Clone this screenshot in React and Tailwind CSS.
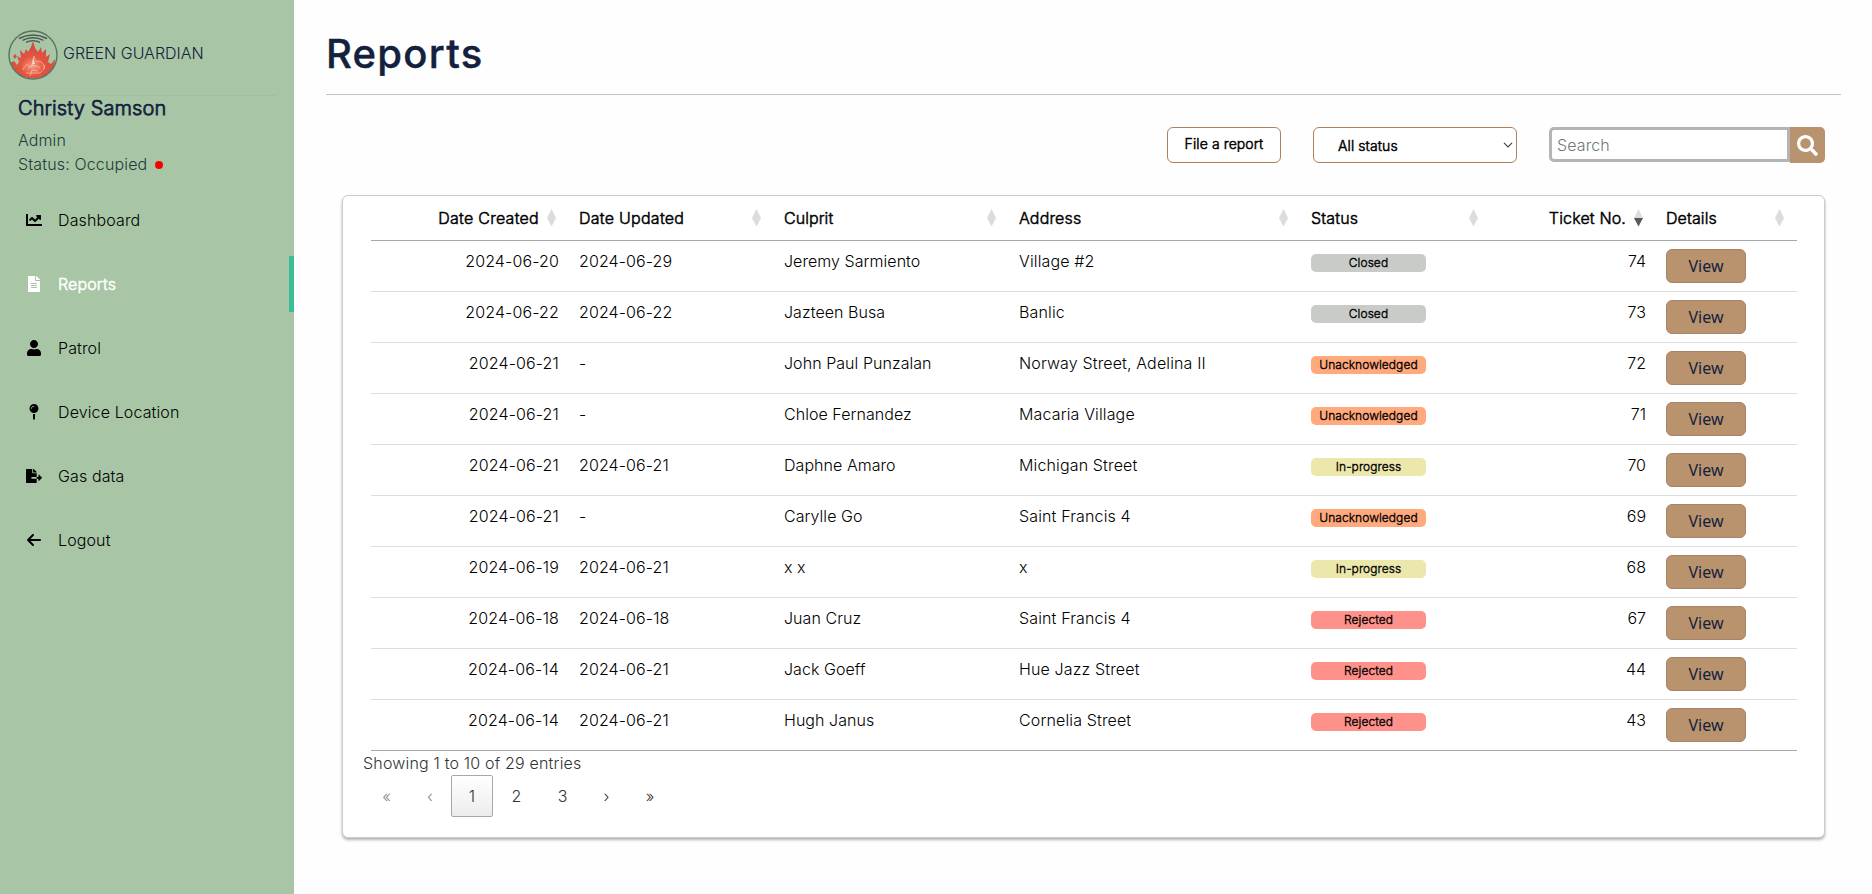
import { FaChartLine, FaFileAlt, FaUser, FaMapPin, FaFileExport, FaSearch } from "react-icons/fa";
import { FaArrowLeft } from "react-icons/fa6";

const BOLD = "[-webkit-text-stroke:0.5px_currentColor]";

const nav = [
  { label: "Dashboard", icon: FaChartLine },
  { label: "Reports", icon: FaFileAlt, active: true },
  { label: "Patrol", icon: FaUser },
  { label: "Device Location", icon: FaMapPin },
  { label: "Gas data", icon: FaFileExport },
  { label: "Logout", icon: FaArrowLeft },
];

const rows = [
  ["2024-06-20", "2024-06-29", "Jeremy Sarmiento", "Village #2", "Closed", 74],
  ["2024-06-22", "2024-06-22", "Jazteen Busa", "Banlic", "Closed", 73],
  ["2024-06-21", "-", "John Paul Punzalan", "Norway Street, Adelina II", "Unacknowledged", 72],
  ["2024-06-21", "-", "Chloe Fernandez", "Macaria Village", "Unacknowledged", 71],
  ["2024-06-21", "2024-06-21", "Daphne Amaro", "Michigan Street", "In-progress", 70],
  ["2024-06-21", "-", "Carylle Go", "Saint Francis 4", "Unacknowledged", 69],
  ["2024-06-19", "2024-06-21", "x x", "x", "In-progress", 68],
  ["2024-06-18", "2024-06-18", "Juan Cruz", "Saint Francis 4", "Rejected", 67],
  ["2024-06-14", "2024-06-21", "Jack Goeff", "Hue Jazz Street", "Rejected", 44],
  ["2024-06-14", "2024-06-21", "Hugh Janus", "Cornelia Street", "Rejected", 43],
];

const badge = {
  Closed: "bg-[#c9cbc8]",
  Unacknowledged: "bg-[#ffa97c]",
  "In-progress": "bg-[#ece7ab]",
  Rejected: "bg-[#ff918b]",
};

const columns = [
  { label: "Date Created", right: true, tracking: "tracking-[0.26px]" },
  { label: "Date Updated", tracking: "tracking-[0.26px]" },
  { label: "Culprit", tracking: "tracking-[0.05px]" },
  { label: "Address", tracking: "tracking-[0.15px]" },
  { label: "Status", tracking: "tracking-[0.15px]" },
  { label: "Ticket No.", right: true, sorted: true, tracking: "tracking-[0.15px]" },
  { label: "Details", tracking: "tracking-[0.1px]" },
];

const GRID = "grid grid-cols-[198px_205px_235px_292px_190px_165px_141px]";

function Logo() {
  return (
    <svg viewBox="0 0 50 50" className="size-[50px] shrink-0">
      <defs>
        <radialGradient id="flame" cx="50%" cy="68%" r="60%">
          <stop offset="0" stopColor="#f39a80" />
          <stop offset="0.45" stopColor="#e4533f" />
          <stop offset="1" stopColor="#cf4a42" />
        </radialGradient>
        <clipPath id="disc"><circle cx="25" cy="25" r="23.6" /></clipPath>
      </defs>
      <g clipPath="url(#disc)">
        <path d="M2 33 L6 31 L9 35 L11 32 L9 26 L13 28 L12 20 L16 24 L18 19 L20 22 L23 17 L25 11 L27 18 L30 22 L33 17 L34 23 L38 19 L38 27 L42 24 L40 32 L43 34 L47 29 L46 40 L38 48 L12 48 L4 40 Z" fill="url(#flame)" />
        <path d="M5 26 l2.4 -2 l1.4 2.6 l-2 2.4z" fill="#cf5045" />
        <path d="M15 40 q3 -8 6 -4 t5 -10 q1 8 5 5 q6 2 5 8 M18 43 h14 q5 -3 5 -8 M20 38 q6 -5 12 0 M25 28 v8 M22 46 l2 -6 l6 1" fill="none" stroke="#ffd0b0" strokeWidth="0.8" opacity="0.75" />
        <path d="M24 34 l1.5 -5 l1.5 5z" fill="#ffe9d5" opacity="0.8" />
      </g>
      <path d="M11 8.5 Q25 1.5 39 8.5" fill="none" stroke="#4d5551" strokeWidth="1.5" />
      <path d="M14.5 10.3 Q25 5.2 35.5 10.3" fill="none" stroke="#4d5551" strokeWidth="1.3" />
      <path d="M18 12.3 Q25 9 32 12.3" fill="none" stroke="#4d5551" strokeWidth="1.3" />
      <circle cx="25" cy="25" r="24" fill="none" stroke="#557462" strokeWidth="1.4" />
    </svg>
  );
}

function SortMark({ sorted }) {
  return (
    <svg viewBox="0 0 9 18" className="h-[18px] w-[9px] shrink-0">
      <path d="M4.5 0 L9 9 H0 Z" fill="#dcdcdc" />
      <path d="M0 9 H9 L4.5 17.5 Z" fill={sorted ? "#565b60" : "#dcdcdc"} />
    </svg>
  );
}

export default function App() {
  return (
    <div className="flex h-[894px] w-[1872px] overflow-hidden bg-[#fefefe] font-['Inter',sans-serif] text-base font-light text-black">
      <aside className="flex w-[294px] shrink-0 flex-col bg-[#a8c6a5]">
        <div className="flex h-[95px] items-center gap-[5px] pt-[15px] pl-2 text-[#14213d]">
          <Logo />
          <span className="pb-1 leading-6">GREEN GUARDIAN</span>
        </div>
        <div className="mr-[18px] ml-4 h-px bg-[#9fbf9f]" />
        <div className="flex flex-col pl-[18px] text-[#1f3a3a]">
          <div className="mb-2 h-6 text-[20px] leading-6 tracking-[0.1px] text-[#14213d] [-webkit-text-stroke:0.75px_currentColor]">Christy Samson</div>
          <div className="leading-[25px] tracking-[0.1px]">Admin</div>
          <div className="-mt-px mb-px flex items-center gap-2 leading-[25px] tracking-[0.15px]">
            Status: Occupied
            <span className="size-2 rounded-full bg-[#f80000]" />
          </div>
        </div>
        <nav className="mt-[14px] flex flex-col gap-2 tracking-[0.12px]">
          {nav.map(({ label, icon: Icon, active }) => (
            <a
              key={label}
              className={`flex h-14 items-center gap-[15px] pl-[25px] ${active ? "border-r-[5px] border-[#3cbc98] text-white [-webkit-text-stroke:0.5px_currentColor]" : ""}`}
            >
              <span className="flex w-[18px] justify-center [-webkit-text-stroke:0px]"><Icon size={16} /></span>
              {label}
            </a>
          ))}
        </nav>
      </aside>

      <main className="flex flex-1 flex-col pr-[31px] pl-8">
        <h1 className="h-[94px] pt-[29px] text-[40px] leading-[50px] font-medium tracking-[1.25px] text-[#14213d] [-webkit-text-stroke:0.4px_currentColor]">Reports</h1>
        <div className="mr-px h-px bg-[#c3c3c3]" />

        <div className="mt-8 mr-[17px] flex justify-end gap-8">
          <button className={`h-9 w-[114px] rounded-md border border-[#b18058] bg-white pb-[3px] text-[14px] tracking-[0.1px] ${BOLD}`}>
            File a report
          </button>
          <div className="flex h-9 w-[204px] items-center justify-between rounded-md border border-[#b18058] bg-white pr-[3px] pl-6">
            <span className={`text-[14px] tracking-[0.1px] ${BOLD}`}>All status</span>
            <svg viewBox="0 0 10 6" className="h-1.5 w-2.5" fill="none" stroke="#444" strokeWidth="1.2">
              <path d="M1 0.8 L5 4.8 L9 0.8" />
            </svg>
          </div>
          <div className="flex h-9">
            <div className="flex h-[35px] w-[241px] items-center rounded-l-[5px] border-[3px] border-[#b4b4b4] bg-white pl-[5px] tracking-[0.1px] text-[#757575]">
              Search
            </div>
            <button className="flex h-9 w-[35px] items-center justify-center rounded-r-[5px] bg-[#b8936e] text-white">
              <FaSearch size={21} />
            </button>
          </div>
        </div>

        <section className="mt-8 mr-[17px] ml-4 flex h-[643px] flex-col rounded-md border border-[#cbcbcb] bg-white pr-[27px] pl-7 shadow-[0_2px_3px_rgba(0,0,0,0.3)]">
          <div className={`${GRID} h-[45px] border-b border-[#a8a8a8]`}>
            {columns.map((c) => (
              <div key={c.label} className={`flex items-center pr-[13px] pl-[10px] ${c.right ? "justify-end gap-2" : "justify-between"}`}>
                <span className={`${BOLD} ${c.tracking}`}>{c.label}</span>
                <SortMark sorted={c.sorted} />
              </div>
            ))}
          </div>
          {rows.map((r, i) => (
            <div
              key={r[5]}
              className={`${GRID} h-[51px] border-b leading-6 *:px-[10px] *:pt-2 ${i === rows.length - 1 ? "border-[#a8a8a8]" : "border-[#dddddd]"}`}
            >
              <div className="text-right tracking-[0.13px]">{r[0]}</div>
              <div className="tracking-[0.1px]">{r[1]}</div>
              <div className="tracking-[0.05px]">{r[2]}</div>
              <div className="tracking-[0.14px]">{r[3]}</div>
              <div>
                <div className={`mt-[5px] h-[18px] w-[115px] rounded-[5px] text-center text-[12px] leading-[18px] tracking-[0.05px] [-webkit-text-stroke:0.35px_currentColor] ${badge[r[4]]}`}>{r[4]}</div>
              </div>
              <div className="text-right">{r[5]}</div>
              <div>
                <button className="flex h-[34px] w-20 items-center justify-center rounded-md border border-[#a58469] bg-[#b8936e] font-['Noto_Sans',sans-serif] font-normal text-[#14213d]">
                  View
                </button>
              </div>
            </div>
          ))}
          <div className="-ml-2 h-6 leading-6 tracking-[0.18px] text-[#333]">Showing 1 to 10 of 29 entries</div>
          <div className="-ml-[7px] flex h-[42px] items-center text-[#333] *:text-center">
            <span className="w-[45px] text-[#888]">«</span>
            <span className="w-[42px] text-[#888]">‹</span>
            <span className="h-[42px] w-[42px] rounded-[2px] border border-[#a8a8a8] bg-linear-to-b from-white to-[#ececec] leading-10">1</span>
            <span className="w-[47px]">2</span>
            <span className="w-[45px]">3</span>
            <span className="w-[43px]">›</span>
            <span className="w-[44px]">»</span>
          </div>
        </section>
      </main>
    </div>
  );
}
